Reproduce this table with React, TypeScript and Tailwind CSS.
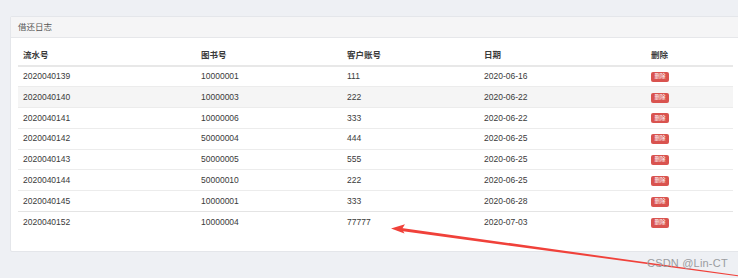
import React from "react";

interface LogRow {
  serial: string;
  bookNo: string;
  account: string;
  date: string;
}

const rows: LogRow[] = [
  { serial: "2020040139", bookNo: "10000001", account: "111", date: "2020-06-16" },
  { serial: "2020040140", bookNo: "10000003", account: "222", date: "2020-06-22" },
  { serial: "2020040141", bookNo: "10000006", account: "333", date: "2020-06-22" },
  { serial: "2020040142", bookNo: "50000004", account: "444", date: "2020-06-25" },
  { serial: "2020040143", bookNo: "50000005", account: "555", date: "2020-06-25" },
  { serial: "2020040144", bookNo: "50000010", account: "222", date: "2020-06-25" },
  { serial: "2020040145", bookNo: "10000001", account: "333", date: "2020-06-28" },
  { serial: "2020040152", bookNo: "10000004", account: "77777", date: "2020-07-03" },
];

const App: React.FC = () => {
  return (
    <div
      className="relative w-[738px] h-[278px] overflow-hidden bg-[#eef0f4] pt-[16px] pl-[10px]"
      style={{ fontFamily: '"Liberation Sans", "Noto Sans CJK SC", sans-serif' }}
    >
      {/* panel */}
      <div className="w-[731px] bg-white border border-[#e4e6ea] rounded-[2px]">
        <div className="h-[21px] flex items-center px-[7px] bg-[#f5f5f6] border-b border-[#e6e7ea] text-[8.5px] text-[#555]">
          借还日志
        </div>
        <div className="px-[7px] pt-[8px] pb-[19px]">
          <table className="w-[715px] table-fixed border-collapse text-[8.5px] text-[#3a3a3a]">
            <colgroup>
              <col className="w-[178px]" />
              <col className="w-[146px]" />
              <col className="w-[137px]" />
              <col className="w-[167px]" />
              <col className="w-[87px]" />
            </colgroup>
            <thead>
              <tr className="h-[20px] border-b-2 border-[#e8e8e8] font-bold text-left">
                <th className="px-[5px]">流水号</th>
                <th className="px-[5px]">图书号</th>
                <th className="px-[5px]">客户账号</th>
                <th className="px-[5px]">日期</th>
                <th className="px-[5px]">删除</th>
              </tr>
            </thead>
            <tbody>
              {rows.map((r, i) => (
                <tr
                  key={r.serial}
                  className={
                    "h-[20.8px] border-t " +
                    (i === 7 ? "border-[#e4e4e4] " : "border-[#ececec] ") +
                    (i === 1 ? "bg-[#f5f5f5]" : "")
                  }
                >
                  <td className="px-[5px]">{r.serial}</td>
                  <td className="px-[5px]">{r.bookNo}</td>
                  <td className="px-[5px]">{r.account}</td>
                  <td className="px-[5px]">{r.date}</td>
                  <td className="px-[5px]">
                    <span className="inline-flex items-center justify-center w-[18px] h-[10px] rounded-[2px] bg-[#d9534f] text-white text-[5.5px] leading-none align-middle">
                      删除
                    </span>
                  </td>
                </tr>
              ))}
            </tbody>
          </table>
        </div>
      </div>

      {/* annotation arrow */}
      <svg
        className="absolute left-0 top-0 pointer-events-none"
        width="738"
        height="278"
        viewBox="0 0 738 278"
      >
        <polygon points="398,227.4 740,275.5 740,276.5 397.6,230.6" fill="#f0413a" />
        <polygon points="391,228.6 405,224.2 402,229 404.5,233.6" fill="#f0413a" />
      </svg>

      {/* watermark */}
      <div className="absolute left-[647px] top-[255px] text-[11px] text-[#9a9ca0] tracking-[0.2px]">
        CSDN @Lin-CT
      </div>
    </div>
  );
};

export default App;
